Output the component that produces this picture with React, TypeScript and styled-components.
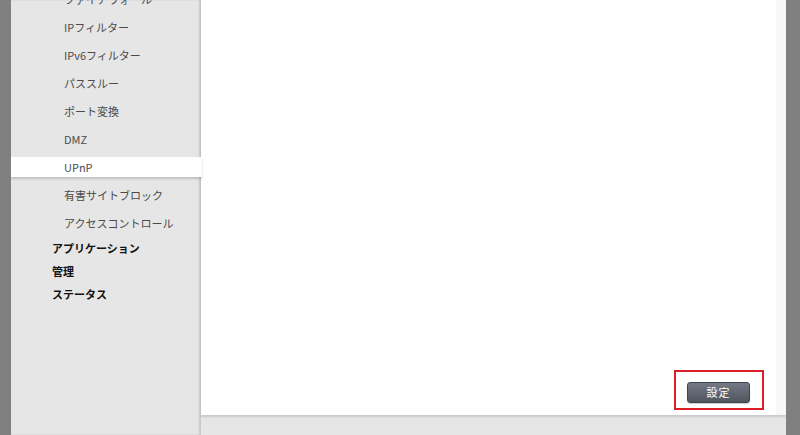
import React from "react";
import styled, { createGlobalStyle } from "styled-components";

const Global = createGlobalStyle`
  html, body { margin: 0; padding: 0; }
  body { font-family: "Noto Sans CJK JP", "Noto Sans", sans-serif; }
`;

const Page = styled.div`
  display: flex;
  height: 435px;
  width: 800px;
  background: #808080;
  padding: 0 14px 0 11px;
  box-sizing: border-box;
  overflow: hidden;
`;

const Frame = styled.div`
  flex: 1;
  display: flex;
  background: #e6e6e6;
  overflow: hidden;
`;

const Sidebar = styled.nav`
  width: 190px;
  flex: none;
  display: flex;
  flex-direction: column;
  box-shadow: inset -2px 0 2px rgba(0, 0, 0, 0.13);
  position: relative;
  z-index: 1;
`;

const SubList = styled.ul`
  list-style: none;
  margin: -11px 0 0 0;
  padding: 0;
  display: flex;
  flex-direction: column;
  gap: 8px;
`;

const SubItem = styled.li<{ $active?: boolean }>`
  height: 20px;
  line-height: 20px;
  padding-left: 53px;
  font-size: 11px;
  color: #4a4a4a;
  white-space: nowrap;
  background: ${(p) => (p.$active ? "#ffffff" : "transparent")};
  box-shadow: ${(p) => (p.$active ? "0 2px 2px rgba(0,0,0,0.16)" : "none")};
  margin-right: ${(p) => (p.$active ? "-1px" : "0")};
`;

const TopList = styled.ul`
  list-style: none;
  margin: 4px 0 0 0;
  padding: 0;
`;

const TopItem = styled.li`
  height: 23px;
  line-height: 23px;
  padding-left: 41px;
  font-size: 11px;
  font-weight: bold;
  color: #111;
`;

const Main = styled.main`
  flex: 1;
  display: flex;
  flex-direction: column;
  padding-bottom: 20px;
`;

const Panel = styled.section`
  flex: 1;
  background: #ffffff;
  border-right: 10px solid #f8f8f8;
  box-shadow: 0 2px 2px rgba(0, 0, 0, 0.12);
  display: flex;
  flex-direction: column;
  justify-content: flex-end;
  align-items: flex-end;
  padding: 0 12px 5px 0;
`;

const Highlight = styled.div`
  border: 2px solid #dc1f27;
  padding: 10px 12px 5px 11px;
  display: flex;
`;

const Button = styled.button`
  width: 63px;
  height: 21px;
  border: 1px solid #40454d;
  border-radius: 3px;
  background: linear-gradient(#737985, #50565f);
  color: #fff;
  font-family: "Noto Sans CJK JP", sans-serif;
  font-size: 11px;
  letter-spacing: 1px;
  padding: 0;
  line-height: 19px;
  box-shadow: 0 1px 1px rgba(0, 0, 0, 0.2);
`;

const subItems = [
  "ファイアウォール",
  "IPフィルター",
  "IPv6フィルター",
  "パススルー",
  "ポート変換",
  "DMZ",
  "UPnP",
  "有害サイトブロック",
  "アクセスコントロール",
];

const topItems = ["アプリケーション", "管理", "ステータス"];

export default function App() {
  return (
    <>
      <Global />
      <Page>
        <Frame>
          <Sidebar>
            <SubList>
              {subItems.map((s) => (
                <SubItem key={s} $active={s === "UPnP"}>
                  {s}
                </SubItem>
              ))}
            </SubList>
            <TopList>
              {topItems.map((t) => (
                <TopItem key={t}>{t}</TopItem>
              ))}
            </TopList>
          </Sidebar>
          <Main>
            <Panel>
              <Highlight>
                <Button>設定</Button>
              </Highlight>
            </Panel>
          </Main>
        </Frame>
      </Page>
    </>
  );
}
